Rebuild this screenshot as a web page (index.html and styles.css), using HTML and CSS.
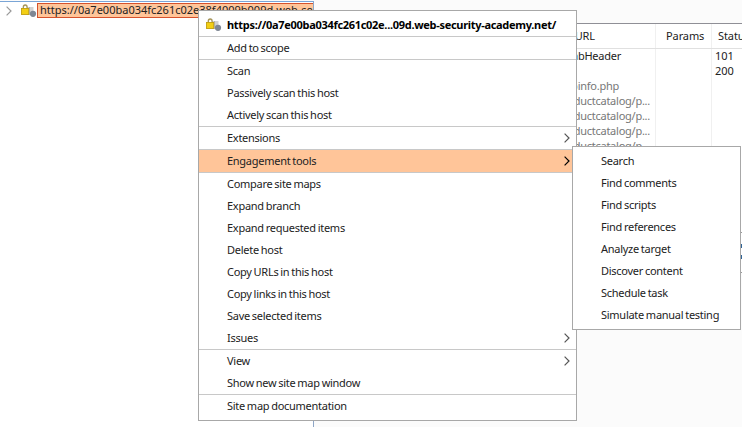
FILE: index.html
```
<!DOCTYPE html>
<html lang="en">
<head>
<meta charset="utf-8">
<title>Site map</title>
<link rel="stylesheet" href="styles.css">
</head>
<body>
<svg width="0" height="0" class="defs">
  <symbol id="host" viewBox="0 0 16 14">
    <path d="M6 3h6.5v8H6z" fill="#d2d2d2"/><path d="M8.5 3v8M6 10.5h6" stroke="#b4b4b4" fill="none"/>
    <path d="M2.3 6V3.2q0-2.2 1.9-2.2t1.9 2.2V6" fill="none" stroke="#a6955a" stroke-width="1.3"/>
    <rect x=".5" y="4.5" width="7.2" height="6" fill="#f3cf14" stroke="#c29f10" stroke-width=".9"/>
    <circle cx="12" cy="9.8" r="3.1" fill="#7f8794"/>
  </symbol>
  <symbol id="arrow" viewBox="0 0 6 10"><path d="M.6.6 5 5 .6 9.4" fill="none" stroke="currentColor" stroke-width="1.2"/></symbol>
</svg>
<div class="app">
  <div class="tree">
    <div class="node">
      <svg class="expander"><use href="#arrow"/></svg>
      <svg class="host"><use href="#host"/></svg>
      <span class="label">https://0a7e00ba034fc261c02e38f4009b009d.web-se</span>
    </div>
  </div>
  <div class="detail">
    <div class="table">
      <div class="row head"><span class="url">URL</span><span>Params</span><span>Status</span></div>
      <div class="row"><span class="url">/academyLabHeader</span><span></span><span>101</span></div>
      <div class="row"><span class="url"></span><span></span><span>200</span></div>
      <div class="row dim"><span class="url">/cgi-bin/phpinfo.php</span><span></span><span></span></div>
      <div class="row dim"><span class="url long">/productcatalog/p...</span><span></span><span></span></div>
      <div class="row dim"><span class="url long">/productcatalog/p...</span><span></span><span></span></div>
      <div class="row dim"><span class="url long">/productcatalog/p...</span><span></span><span></span></div>
      <div class="row dim"><span class="url long">/productcatalog/p...</span><span></span><span></span></div>
      <div class="row rest"><span class="url"></span><span></span><span></span></div>
    </div>
    <div class="toolbar"><i></i><i></i></div>
  </div>
</div>
<div class="menu main">
  <div class="item title"><svg class="host"><use href="#host"/></svg><b>https://0a7e00ba034fc261c02e...09d.web-security-academy.net/</b></div>
  <hr>
  <div class="item">Add to scope</div>
  <hr>
  <div class="item">Scan</div>
  <div class="item">Passively scan this host</div>
  <div class="item">Actively scan this host</div>
  <hr>
  <div class="item">Extensions<svg class="more"><use href="#arrow"/></svg></div>
  <hr>
  <div class="item active">Engagement tools<svg class="more"><use href="#arrow"/></svg></div>
  <hr>
  <div class="item">Compare site maps</div>
  <div class="item">Expand branch</div>
  <div class="item">Expand requested items</div>
  <div class="item">Delete host</div>
  <div class="item">Copy URLs in this host</div>
  <div class="item">Copy links in this host</div>
  <div class="item">Save selected items</div>
  <div class="item">Issues<svg class="more"><use href="#arrow"/></svg></div>
  <hr>
  <div class="item">View<svg class="more"><use href="#arrow"/></svg></div>
  <div class="item">Show new site map window</div>
  <hr>
  <div class="item">Site map documentation</div>
</div>
<div class="menu sub">
  <div class="item">Search</div>
  <div class="item">Find comments</div>
  <div class="item">Find scripts</div>
  <div class="item">Find references</div>
  <div class="item">Analyze target</div>
  <div class="item">Discover content</div>
  <div class="item">Schedule task</div>
  <div class="item">Simulate manual testing</div>
</div>
</body>
</html>
```
FILE: styles.css
```
* { box-sizing: border-box; }
body { margin: 0; width: 742px; height: 427px; overflow: hidden; background: #fbfbfb; color: #222; font: 11px/15px "Noto Sans", sans-serif; }
.defs { position: absolute; }
.app { display: flex; height: 427px; }
.tree { width: 314px; border-top: 1px solid #7aa5d6; border-right: 1px solid #8ea6c6; margin-top: 1px; background: #fff; }
.node { display: flex; align-items: center; height: 17px; padding-left: 6px; }
.expander { width: 6px; height: 10px; color: #999; flex: none; }
.host { width: 16px; height: 14px; flex: none; }
.node .host { margin: 0 0 0 9px; }
.label { flex: 1; height: 15px; line-height: 12px; padding-left: 2px; overflow: hidden; white-space: nowrap; background: #ffc599; border: 1px solid #d6522c; border-right: 0; }
.detail { flex: 1; margin-left: 5px; padding-top: 23px; overflow: hidden; }
.table { width: 423px; height: 209px; overflow: hidden; background: #fff; border-top: 1px solid #8f8f96; }
.row { display: grid; grid-template-columns: 336px 56px 60px; height: 15px; line-height: 13px; }
.row span { padding-left: 3px; border-left: 1px solid #f0f0f0; white-space: nowrap; }
.row .url { padding: 0 34px 0 0; border: 0; text-align: right; letter-spacing: -0.25px; }
.row .long { padding-right: 5px; }
.head { height: 25px; line-height: 24px; border-bottom: 1px solid #e0e0e0; }
.head span { padding-left: 6px; letter-spacing: -0.1px; }
.head .url { padding-right: 60px; letter-spacing: -0.1px; }
.head span:nth-child(2) { padding-left: 10px; }
.dim { color: #777; }
.dim .url:not(.long) { padding-right: 36px; }
.rest { height: 120px; }
.toolbar { display: grid; justify-content: end; align-content: center; gap: 7px; height: 41px; padding-bottom: 2px; background: #fff; border: solid #999; border-width: 1px 0; }
.toolbar i { width: 1px; height: 4px; background: #2f6496; }
.menu { position: absolute; background: #fff; border: 1px solid #a8a8a8; padding: 3px 0; letter-spacing: -0.27px; word-spacing: -0.7px; }
.main { left: 198px; top: 10px; width: 379px; }
.sub { left: 572px; top: 146px; width: 169px; }
.item { display: flex; align-items: center; height: 22px; padding: 0 0 2px 28px; white-space: nowrap; }
.title { padding-left: 7px; color: #000; }
.title b { letter-spacing: -0.3px; }
.title .host { margin: 1px 5px 0 0; }
.active { background: #ffc599; }
.more { width: 6px; height: 10px; color: #555; margin: 2px 6px 0 auto; }
.active .more { color: #000; }
hr { height: 1px; margin: 0; border: 0; background: #c8c8c8; }
```
